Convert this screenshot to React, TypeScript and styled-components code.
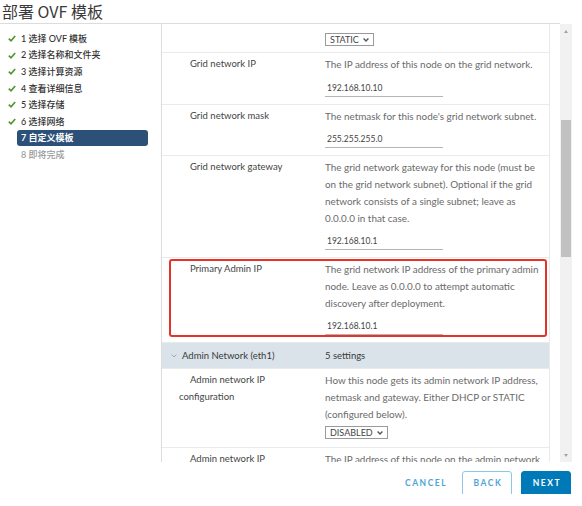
import React from 'react'
import styled, { createGlobalStyle } from 'styled-components'

const GlobalStyle = createGlobalStyle`
  html, body {
    margin: 0;
    padding: 0;
    background: #fff;
  }
  body {
    font-family: Lato, "Noto Sans CJK SC", sans-serif;
  }
`

const Wizard = styled.div`
  width: 582px;
  height: 506px;
  display: flex;
  flex-direction: column;
  overflow: hidden;
`

const Title = styled.h1`
  margin: 0 22px 0 0;
  height: 23px;
  border-bottom: 1px solid #dcdcdc;
  padding-left: 2px;
  font-family: "Noto Sans CJK SC", Lato, sans-serif;
  font-size: 16px;
  font-weight: 400;
  line-height: 22px;
  color: #3a3a3a;
`

const Main = styled.div`
  display: flex;
  height: 438px;
`

const Steps = styled.ol`
  list-style: none;
  margin: 0;
  padding: 6px 0 0;
  width: 161px;
  border-right: 1px solid #dcdcdc;
`

const Step = styled.li<{ $state: 'done' | 'active' | 'todo' }>`
  display: flex;
  align-items: center;
  height: 16.6px;
  box-sizing: border-box;
  font-size: 9px;
  font-weight: ${p => (p.$state === 'active' ? 700 : 500)};
  color: ${p => (p.$state === 'active' ? '#fff' : p.$state === 'todo' ? '#9a9a9a' : '#333')};
  background: ${p => (p.$state === 'active' ? '#2d5079' : 'transparent')};
  border-radius: 3px;
  margin: ${p => (p.$state === 'active' ? '0 13px 0 17px' : '0')};
  padding-left: ${p => (p.$state === 'active' ? '4px' : '21px')};
  position: relative;
`

const CheckMark = styled.svg`
  position: absolute;
  left: 8px;
  top: 5px;
`

const Panel = styled.div`
  flex: 1;
  display: flex;
  padding-right: 10px;
`

const Table = styled.div`
  width: 387px;
  border-right: 1px solid #eaeaea;
  overflow: hidden;
  font-size: 9.5px;
`

const Row = styled.div`
  display: grid;
  grid-template-columns: 163px 1fr;
  padding: 3px 0 7px;
  border-bottom: 1px solid #eaeaea;
  position: relative;
`

const TopRow = styled(Row)`
  padding: 9px 0 6px;
`

const Label = styled.div`
  padding: 0 24px 0 17px;
  text-indent: 11px;
  line-height: 16.7px;
  color: #454545;
`

const Desc = styled.div`
  font-size: 9.9px;
  line-height: 16.7px;
  color: #6a6a6a;
`

const Field = styled.div`
  width: 118px;
  height: 17px;
  box-sizing: border-box;
  margin-top: 7px;
  padding-left: 2px;
  border-bottom: 1px solid #b5b5b5;
  font-size: 8.5px;
  line-height: 16px;
  color: #444;
`

const Select = styled.div<{ $gap?: number }>`
  display: inline-flex;
  align-items: center;
  gap: 4px;
  height: 13px;
  box-sizing: border-box;
  margin-top: ${p => p.$gap ?? 0}px;
  padding: 0 4px;
  border: 1px solid #9a9a9a;
  font-size: 9px;
  color: #444;
  text-transform: uppercase;
`

const Highlight = styled.div`
  position: absolute;
  left: 7px;
  top: 1px;
  width: 378px;
  height: 78px;
  box-sizing: border-box;
  border: 2px solid #e5332a;
  border-radius: 3px;
  pointer-events: none;
`

const Group = styled.div`
  display: grid;
  grid-template-columns: 163px 1fr;
  align-items: center;
  height: 25px;
  background: #dbe3ea;
  border-bottom: 1px solid #eaeaea;
  color: #3a3a3a;
`

const GroupName = styled.div`
  display: flex;
  align-items: center;
  gap: 5px;
  padding-left: 9px;
`

const ScrollTrack = styled.div`
  width: 12px;
  margin-left: 10px;
  background: #f1f1f1;
  display: flex;
  flex-direction: column;
`

const ScrollArrow = styled.div<{ $down?: boolean }>`
  height: 14px;
  display: flex;
  align-items: center;
  justify-content: center;
  margin-top: ${p => (p.$down ? 'auto' : '0')};
  &::after {
    content: '';
    border-left: 2.5px solid transparent;
    border-right: 2.5px solid transparent;
    ${p => (p.$down ? 'border-top: 3px solid #a3a3a3;' : 'border-bottom: 3px solid #a3a3a3;')}
  }
`

const Thumb = styled.div`
  background: #c1c1c1;
  margin: 0 1px;
`

const Footer = styled.div`
  height: 32px;
  overflow: hidden;
  display: flex;
  justify-content: flex-end;
  align-items: flex-start;
  padding: 9px 11px 0 0;
  box-sizing: border-box;
`

const Button = styled.button<{ $kind: 'flat' | 'outline' | 'primary' }>`
  height: 36px;
  padding: 0 9px 13px 10.5px;
  margin-left: ${p => (p.$kind === 'primary' ? '9px' : p.$kind === 'outline' ? '5px' : '0')};
  border-radius: 3px;
  font-family: Lato, sans-serif;
  font-size: 8.5px;
  font-weight: 700;
  letter-spacing: 1.5px;
  border: 1px solid ${p => (p.$kind === 'outline' ? '#8cc8e8' : p.$kind === 'primary' ? '#0079b8' : 'transparent')};
  background: ${p => (p.$kind === 'primary' ? '#0079b8' : '#fff')};
  color: ${p => (p.$kind === 'primary' ? '#fff' : '#4ea4d6')};
`

const Chevron = ({ color, width = 1.4 }: { color: string; width?: number }) => (
  <svg width="6" height="4" viewBox="0 0 6 4">
    <path d="M0.6 0.6 L3 3 L5.4 0.6" fill="none" stroke={color} strokeWidth={width} />
  </svg>
)

type StepState = 'done' | 'active' | 'todo'

const steps: { label: string; state: StepState }[] = [
  { label: '1 选择 OVF 模板', state: 'done' },
  { label: '2 选择名称和文件夹', state: 'done' },
  { label: '3 选择计算资源', state: 'done' },
  { label: '4 查看详细信息', state: 'done' },
  { label: '5 选择存储', state: 'done' },
  { label: '6 选择网络', state: 'done' },
  { label: '7 自定义模板', state: 'active' },
  { label: '8 即将完成', state: 'todo' },
]

type Setting = {
  label: string
  lines: string[]
  value?: string
  select?: string
  marked?: boolean
}

const gridSettings: Setting[] = [
  {
    label: 'Grid network IP',
    lines: ['The IP address of this node on the grid network.'],
    value: '192.168.10.10',
  },
  {
    label: 'Grid network mask',
    lines: ["The netmask for this node's grid network subnet."],
    value: '255.255.255.0',
  },
  {
    label: 'Grid network gateway',
    lines: [
      'The grid network gateway for this node (must be',
      'on the grid network subnet). Optional if the grid',
      'network consists of a single subnet; leave as',
      '0.0.0.0 in that case.',
    ],
    value: '192.168.10.1',
  },
  {
    label: 'Primary Admin IP',
    lines: [
      'The grid network IP address of the primary admin',
      'node. Leave as 0.0.0.0 to attempt automatic',
      'discovery after deployment.',
    ],
    value: '192.168.10.1',
    marked: true,
  },
]

const adminSettings: Setting[] = [
  {
    label: 'Admin network IP configuration',
    lines: [
      'How this node gets its admin network IP address,',
      'netmask and gateway. Either DHCP or STATIC',
      '(configured below).',
    ],
    select: 'Disabled',
  },
  {
    label: 'Admin network IP',
    lines: ['The IP address of this node on the admin network'],
  },
]

const SettingRow = ({ s }: { s: Setting }) => (
  <Row>
    <Label>{s.label}</Label>
    <Desc>
      {s.lines.map((l, i) => (
        <div key={i}>{l}</div>
      ))}
      {s.value && <Field>{s.value}</Field>}
      {s.select && (
        <Select $gap={4}>
          {s.select}
          <Chevron color="#555" />
        </Select>
      )}
    </Desc>
    {s.marked && <Highlight />}
  </Row>
)

export default function App() {
  return (
    <Wizard>
      <GlobalStyle />
      <Title>部署 OVF 模板</Title>
      <Main>
        <Steps>
          {steps.map(st => (
            <Step key={st.label} $state={st.state}>
              {st.state === 'done' && (
                <CheckMark width="8" height="7" viewBox="0 0 8 7">
                  <path d="M0.8 3.6 L3 5.8 L7.2 1" fill="none" stroke="#4a962c" strokeWidth="1.6" />
                </CheckMark>
              )}
              {st.label}
            </Step>
          ))}
        </Steps>
        <Panel>
          <Table>
            <TopRow>
              <div />
              <div>
                <Select>
                  Static
                  <Chevron color="#555" />
                </Select>
              </div>
            </TopRow>
            {gridSettings.map(s => (
              <SettingRow key={s.label} s={s} />
            ))}
            <Group>
              <GroupName>
                <Chevron color="#a0a0a0" width={0.9} />
                Admin Network (eth1)
              </GroupName>
              <span>5 settings</span>
            </Group>
            {adminSettings.map(s => (
              <SettingRow key={s.label} s={s} />
            ))}
          </Table>
          <ScrollTrack>
            <ScrollArrow />
            <Thumb style={{ marginTop: 82, height: 137 }} />
            <ScrollArrow $down />
          </ScrollTrack>
        </Panel>
      </Main>
      <Footer>
        <Button $kind="flat">CANCEL</Button>
        <Button $kind="outline">BACK</Button>
        <Button $kind="primary">NEXT</Button>
      </Footer>
    </Wizard>
  )
}
